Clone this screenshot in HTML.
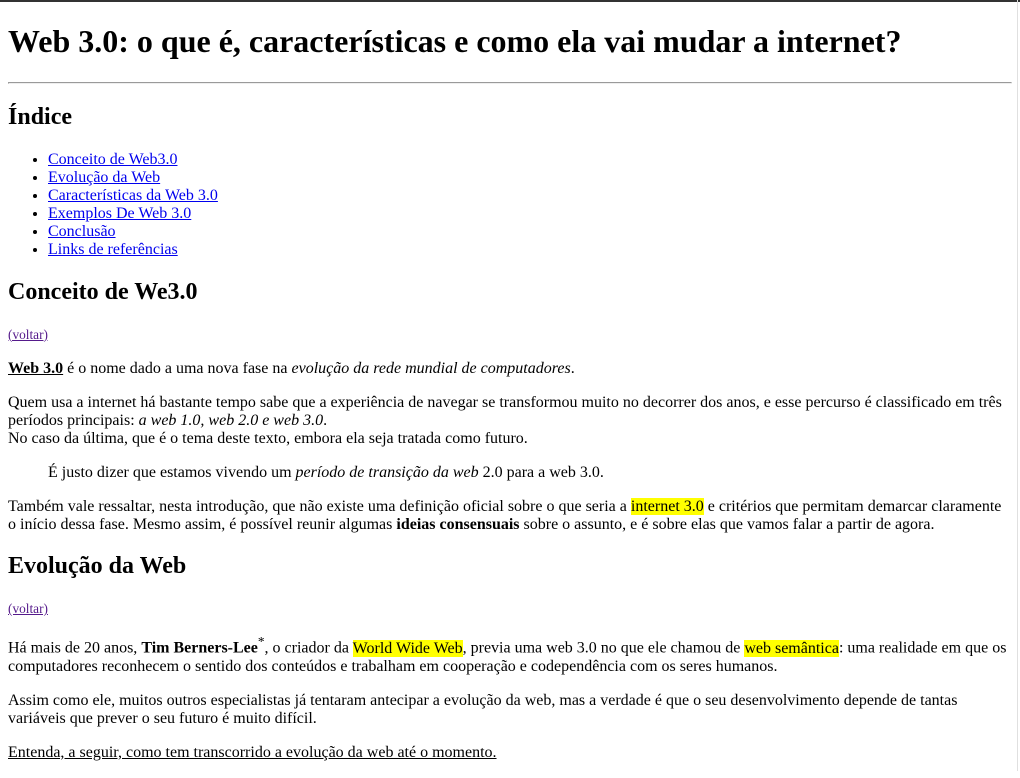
<!DOCTYPE html>
<html><head><meta charset="utf-8">
<style>
html{border-top:2px solid #333;background:#fff}
body{margin:8px;font-family:"Liberation Serif",serif;font-size:16px;color:#000}
a{color:#0000ee}
a.v{color:#551a8b}
mark{background:#ffff00;color:#000}
#edge{position:fixed;top:0;right:2px;width:1px;height:100%;background:#e0e0e0}
sup{font-size:smaller}
</style></head><body>
<div id="edge"></div>
<h1>Web 3.0: o que é, características e como ela vai mudar a internet?</h1>
<hr>
<h2>Índice</h2>
<ul>
<li><a href="#a">Conceito de Web3.0</a></li>
<li><a href="#b">Evolução da Web</a></li>
<li><a href="#c">Características da Web 3.0</a></li>
<li><a href="#d">Exemplos De Web 3.0</a></li>
<li><a href="#e">Conclusão</a></li>
<li><a href="#f">Links de referências</a></li>
</ul>
<h2 id="a">Conceito de We3.0</h2>
<p><small><a class="v" href="#">(voltar)</a></small></p>
<p><b><u>Web 3.0</u></b> é o nome dado a uma nova fase na <i>evolução da rede mundial de computadores</i>.</p>
<p>Quem usa a internet há bastante tempo sabe que a experiência de navegar se transformou muito no decorrer dos anos, e esse percurso é classificado em três períodos principais: <i>a web 1.0, web 2.0 e web 3.0</i>.<br>No caso da última, que é o tema deste texto, embora ela seja tratada como futuro.</p>
<blockquote>É justo dizer que estamos vivendo um <i>período de transição da web</i> 2.0 para a web 3.0.</blockquote>
<p>Também vale ressaltar, nesta introdução, que não existe uma definição oficial sobre o que seria a <mark>internet 3.0</mark> e critérios que permitam demarcar claramente o início dessa fase. Mesmo assim, é possível reunir algumas <b>ideias consensuais</b> sobre o assunto, e é sobre elas que vamos falar a partir de agora.</p>
<h2 id="b">Evolução da Web</h2>
<p><small><a class="v" href="#">(voltar)</a></small></p>
<p>Há mais de 20 anos, <b>Tim Berners-Lee</b><sup>*</sup>, o criador da <mark>World Wide Web</mark>, previa uma web 3.0 no que ele chamou de <mark>web semântica</mark>: uma realidade em que os computadores reconhecem o sentido dos conteúdos e trabalham em cooperação e codependência com os seres humanos.</p>
<p>Assim como ele, muitos outros especialistas já tentaram antecipar a evolução da web, mas a verdade é que o seu desenvolvimento depende de tantas variáveis que prever o seu futuro é muito difícil.</p>
<p><u>Entenda, a seguir, como tem transcorrido a evolução da web até o momento.</u></p>
</body></html>
